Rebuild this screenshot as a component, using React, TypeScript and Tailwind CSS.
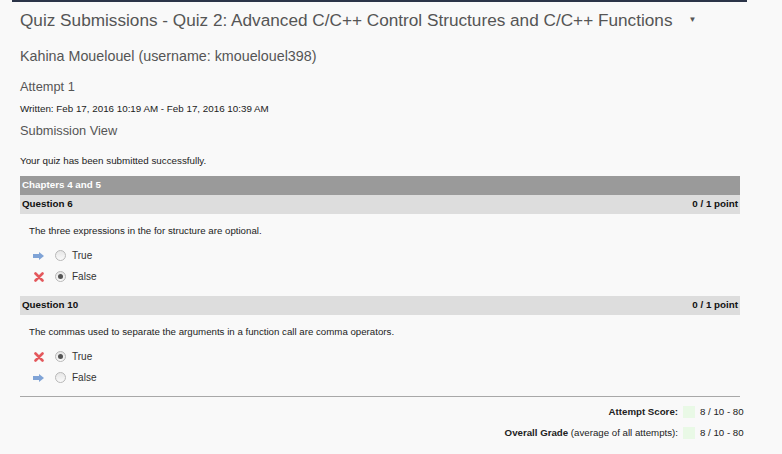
import React from "react";

const font = { fontFamily: '"Liberation Sans", Arial, sans-serif' };

function Arrow() {
  return (
    <svg width="11" height="8" viewBox="0 0 11 8" className="block">
      <path d="M0 2 H6 V0 L11 4 L6 8 V6 H0 Z" fill="#7fa3d6" />
    </svg>
  );
}

function Cross() {
  return (
    <svg width="10" height="10" viewBox="0 0 10 10" className="block">
      <path d="M1.5 1.5 L8.5 8.5 M8.5 1.5 L1.5 8.5" stroke="#e4585c" strokeWidth="2.6" strokeLinecap="round" />
    </svg>
  );
}

function Radio({ checked }: { checked?: boolean }) {
  return (
    <span className="flex h-[11px] w-[11px] items-center justify-center rounded-full border border-[#b8b8b8] bg-gradient-to-b from-[#e6e6e6] to-[#fafafa]">
      {checked && <span className="h-[5px] w-[5px] rounded-full bg-[#555]" />}
    </span>
  );
}

function Option({ mark, checked, label }: { mark: "arrow" | "cross"; checked?: boolean; label: string }) {
  return (
    <div className="flex h-[21px] items-center">
      <div className="flex w-[35px] justify-center pl-[2px]">{mark === "arrow" ? <Arrow /> : <Cross />}</div>
      <Radio checked={checked} />
      <span className="ml-[6px] text-[10px] text-[#333]">{label}</span>
    </div>
  );
}

function QuestionBar({ title }: { title: string }) {
  return (
    <div className="flex h-[19px] items-center justify-between bg-[#dddddd] px-[2px] text-[9.8px] font-bold text-[#111]">
      <span>{title}</span>
      <span>0 / 1 point</span>
    </div>
  );
}

export default function App() {
  return (
    <div className="min-h-[454px] w-[782px] bg-[#f9f9f9] text-[#333]" style={font}>
      <div className="mx-[12px] h-[2px] w-[735px] bg-[#2b3448]" />
      <div className="px-[20px]">
        <div className="mt-[7px] flex items-center text-[17.2px] leading-[22px] text-[#555]">
          <span>Quiz Submissions - Quiz 2: Advanced C/C++ Control Structures and C/C++ Functions</span>
          <span className="ml-[16px] text-[8px] text-[#555]">▼</span>
        </div>
        <div className="mt-[16px] text-[14.3px] leading-[18px] text-[#555]">Kahina Mouelouel (username: kmouelouel398)</div>
        <div className="mt-[14px] text-[12.8px] leading-[16px] text-[#555]">Attempt 1</div>
        <div className="mt-[8px] text-[9.8px] leading-[12px] text-[#222]">Written: Feb 17, 2016 10:19 AM - Feb 17, 2016 10:39 AM</div>
        <div className="mt-[8px] text-[12.8px] leading-[16px] text-[#555]">Submission View</div>
        <div className="mt-[16px] text-[9.8px] leading-[12px] text-[#222]">Your quiz has been submitted successfully.</div>

        <div className="mt-[9px] w-[720px]">
          <div className="flex h-[19px] items-center bg-[#9a9a9a] px-[2px] text-[9.8px] font-bold text-white">Chapters 4 and 5</div>
          <QuestionBar title="Question 6" />
          <div className="pl-[9px] pt-[11px] text-[9.7px] leading-[12px] text-[#222]">The three expressions in the for structure are optional.</div>
          <div className="mt-[8px]">
            <Option mark="arrow" label="True" />
            <Option mark="cross" checked label="False" />
          </div>
          <div className="mt-[9px]">
            <QuestionBar title="Question 10" />
          </div>
          <div className="pl-[9px] pt-[11px] text-[9.7px] leading-[12px] text-[#222]">The commas used to separate the arguments in a function call are comma operators.</div>
          <div className="mt-[8px]">
            <Option mark="cross" checked label="True" />
            <Option mark="arrow" label="False" />
          </div>
          <div className="mt-[8px] h-px bg-[#a8a8a8]" />
        </div>

        <div className="mt-[9px] flex w-[725px] flex-col items-end gap-[9px] text-[9.7px] leading-[12px] text-[#222]">
          <div className="flex items-center">
            <span className="font-bold">Attempt Score:</span>
            <span className="ml-[5px] h-[12px] w-[12px] bg-[#e9f9e6]" />
            <span className="ml-[5px] w-[45px]">8 / 10 - 80</span>
          </div>
          <div className="flex items-center">
            <span><span className="font-bold">Overall Grade</span> (average of all attempts):</span>
            <span className="ml-[5px] h-[12px] w-[12px] bg-[#e9f9e6]" />
            <span className="ml-[5px] w-[45px]">8 / 10 - 80</span>
          </div>
        </div>
      </div>
    </div>
  );
}
